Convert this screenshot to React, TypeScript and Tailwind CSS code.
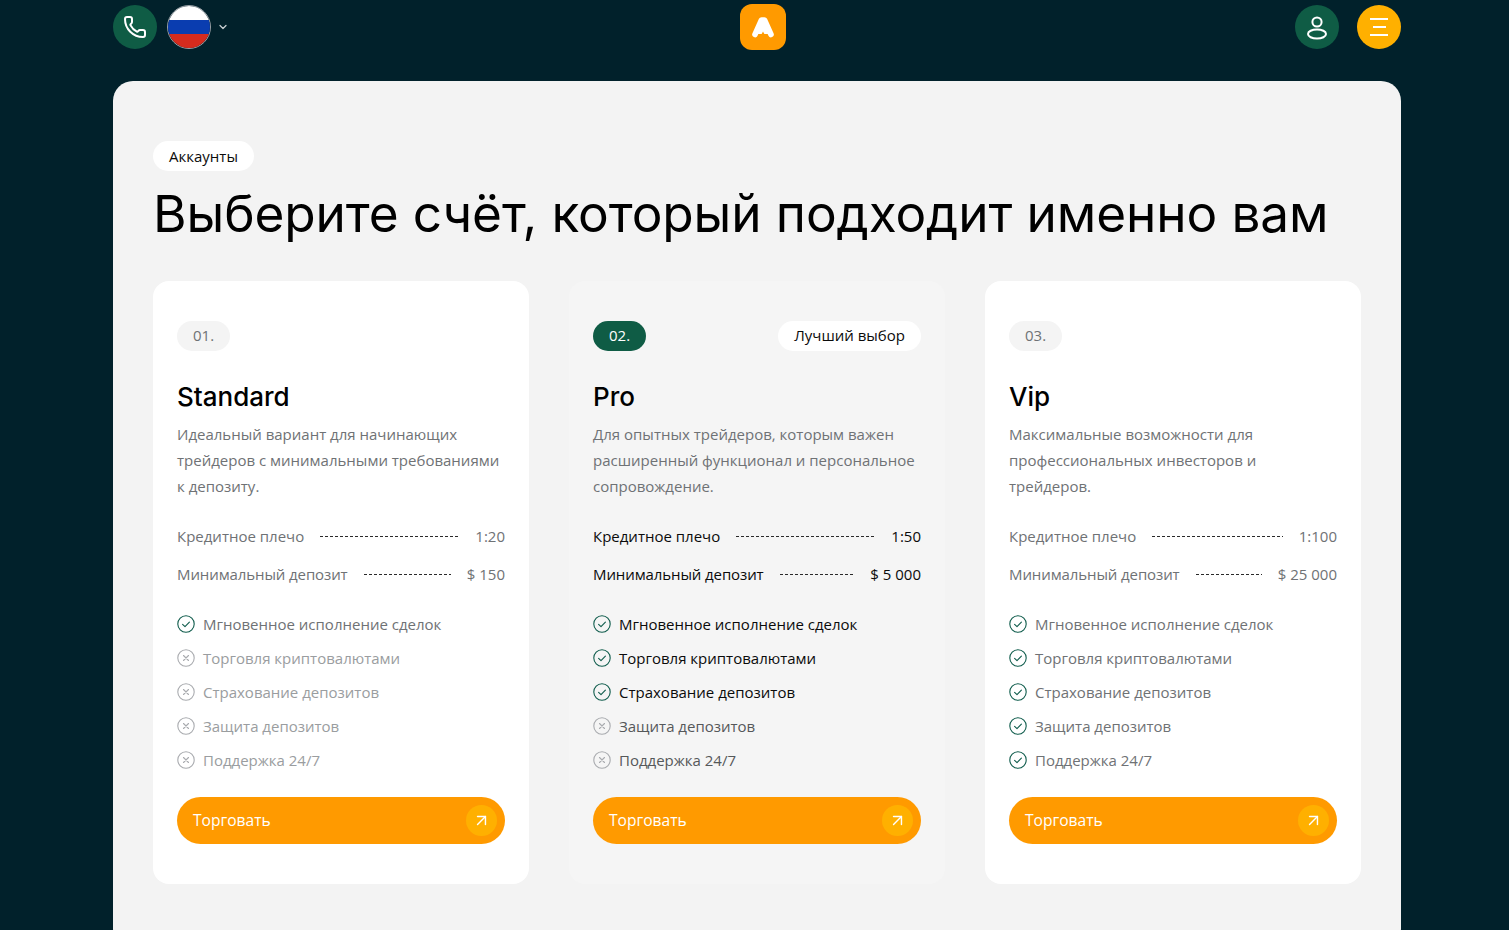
import React from "react";
import { Phone, ChevronDown, ArrowUpRight } from "lucide-react";

const plans = [
  {
    num: "01.",
    name: "Standard",
    desc: "Идеальный вариант для начинающих трейдеров с минимальными требованиями к депозиту.",
    leverage: "1:20",
    deposit: "$ 150",
    included: 1,
  },
  {
    num: "02.",
    name: "Pro",
    desc: "Для опытных трейдеров, которым важен расширенный функционал и персональное сопровождение.",
    leverage: "1:50",
    deposit: "$ 5 000",
    included: 3,
    best: true,
  },
  {
    num: "03.",
    name: "Vip",
    desc: "Максимальные возможности для профессиональных инвесторов и трейдеров.",
    leverage: "1:100",
    deposit: "$ 25 000",
    included: 5,
  },
];

const features = [
  "Мгновенное исполнение сделок",
  "Торговля криптовалютами",
  "Страхование депозитов",
  "Защита депозитов",
  "Поддержка 24/7",
];

function CheckIcon() {
  return (
    <svg width="18" height="18" viewBox="0 0 18 18" fill="none" className="shrink-0">
      <circle cx="9" cy="9" r="8.2" stroke="#0f5c4c" strokeWidth="1.1" />
      <path d="M5.6 9.4l2.4 2.3 4.4-4.6" stroke="#0f5c4c" strokeWidth="1.1" strokeLinecap="round" strokeLinejoin="round" />
    </svg>
  );
}

function CrossIcon() {
  return (
    <svg width="18" height="18" viewBox="0 0 18 18" fill="none" className="shrink-0">
      <circle cx="9" cy="9" r="8.2" stroke="#a9abaf" strokeWidth="1.1" />
      <path d="M6.5 6.5l5 5M11.5 6.5l-5 5" stroke="#a9abaf" strokeWidth="1.1" strokeLinecap="round" />
    </svg>
  );
}

function Flag() {
  return (
    <div className="w-11 h-11 rounded-full overflow-hidden border border-[#9aa0a6] flex flex-col">
      <div className="flex-1 bg-white" />
      <div className="flex-1 bg-[#0a3db0]" />
      <div className="flex-1 bg-[#d52b1e]" />
    </div>
  );
}

function Logo() {
  return (
    <div className="w-[46px] h-[46px] rounded-xl bg-[#ff9a00]">
      <svg width="46" height="46" viewBox="0 0 46 46" fill="none">
        <path d="M15 30.5L21.5 16h3L31 30.5" stroke="#fff" strokeWidth="5.6" strokeLinecap="round" strokeLinejoin="round" />
        <path d="M21 15L15 30h16L25 15z" fill="#fff" />
        <path d="M23 27.5l-2.2 4-.6 2.2h5.6l-.6-2.2z" fill="#ff9a00" />
      </svg>
    </div>
  );
}

function Row({ label, value, dark, tight }: { label: string; value: string; dark: boolean; tight?: boolean }) {
  return (
    <div className={`flex items-center gap-4 text-[15px] leading-[26px] ${dark ? "text-[#0b0b0b]" : "text-[#6f7275]"}`}>
      <span className={tight ? "tracking-[-0.1px]" : ""}>{label}</span>
      <span className="flex-1 h-px bg-[repeating-linear-gradient(90deg,#2a2a2a_0,#2a2a2a_3px,transparent_3px,transparent_5px)]" />
      <span>{value}</span>
    </div>
  );
}

function Card({ plan }: { plan: (typeof plans)[number] }) {
  const best = !!plan.best;
  return (
    <div className={`w-[376px] rounded-[16px] px-6 pt-10 pb-10 ${best ? "bg-[#f5f5f5]" : "bg-white"}`}>
      <div className="flex items-center justify-between h-[30px]">
        <span className={`h-[30px] px-4 pb-[1px] rounded-full flex items-center text-[15px] ${best ? "bg-[#0f5c45] text-white" : "bg-[#f4f4f4] text-[#6f7275]"}`}>
          {plan.num}
        </span>
        {best && (
          <span className="h-[30px] px-4 pb-[1px] rounded-full bg-white flex items-center text-[15px] text-[#0b0b0b]">Лучший выбор</span>
        )}
      </div>
      <h3 className="mt-[28px] text-[26px] leading-[36px] font-medium text-black font-['Inter',sans-serif]">{plan.name}</h3>
      <p className="mt-[6px] text-[15px] leading-[26px] text-[#6f7275]">{plan.desc}</p>
      <div className="mt-[24px] flex flex-col gap-3">
        <Row label="Кредитное плечо" value={plan.leverage} dark={best} />
        <Row label="Минимальный депозит" value={plan.deposit} dark={best} tight />
      </div>
      <ul className="mt-[24px] flex flex-col gap-2">
        {features.map((f, i) => {
          const on = i < plan.included;
          return (
            <li key={f} className="flex items-center gap-2 h-[26px] text-[15px]">
              {on ? <CheckIcon /> : <CrossIcon />}
              <span className={best && on ? "text-[#0b0b0b]" : best ? "text-[#55585a]" : on ? "text-[#6f7275]" : "text-[#9a9da0]"}>{f}</span>
            </li>
          );
        })}
      </ul>
      <button className="mt-[24px] w-full h-[47px] rounded-full bg-[#ff9a00] pl-4 pr-2 flex items-center justify-between text-white text-[15.6px]">
        <span>Торговать</span>
        <span className="w-[31px] h-[31px] rounded-full bg-[#ffb000] flex items-center justify-center">
          <ArrowUpRight className="w-[19px] h-[19px]" strokeWidth={1.8} />
        </span>
      </button>
    </div>
  );
}

export default function App() {
  return (
    <div className="h-[930px] overflow-hidden bg-[#01212b] font-['Open_Sans',sans-serif]">
      <header className="h-[81px] ml-[113px] w-[1288px] flex items-start pt-[5px]">
        <div className="flex-1 flex items-center gap-[10px]">
          <div className="w-11 h-11 rounded-full bg-[#0f5c45] flex items-center justify-center">
            <Phone className="w-6 h-6 text-white" strokeWidth={2} />
          </div>
          <Flag />
          <ChevronDown className="w-3 h-3 text-[#c9cfd2] -ml-[4px]" strokeWidth={2.5} />
        </div>
        <div className="-mt-[1px] ml-[6px] -mr-[6px]">
          <Logo />
        </div>
        <div className="flex-1 flex items-center justify-end gap-[18px]">
          <div className="w-11 h-11 rounded-full bg-[#0f5c45] flex items-center justify-center">
            <svg width="24" height="26" viewBox="0 0 24 26" fill="none" stroke="#fff" strokeWidth="2">
              <circle cx="12" cy="8" r="4.6" />
              <ellipse cx="12" cy="20" rx="9" ry="4.6" />
            </svg>
          </div>
          <div className="w-11 h-11 rounded-full bg-[#ffb000] flex flex-col items-center justify-center gap-[6px]">
            <span className="w-[18px] h-[2px] bg-white" />
            <span className="w-[13px] h-[2px] bg-white" />
            <span className="w-[18px] h-[2px] bg-white" />
          </div>
        </div>
      </header>
      <main className="ml-[113px] w-[1288px] rounded-[20px] bg-[#f3f3f3] px-10 pt-[60px] pb-16">
        <span className="inline-flex h-[30px] items-center rounded-full bg-white px-4 text-[15px] text-[#0b0b0b]">Аккаунты</span>
        <h1 className="mt-[9px] text-[51.3px] leading-[66px] font-normal text-black font-['Inter',sans-serif] tracking-[-0.1px] whitespace-nowrap">
          Выберите счёт, который подходит именно вам
        </h1>
        <div className="mt-[35px] flex gap-10">
          {plans.map((p) => (
            <Card key={p.num} plan={p} />
          ))}
        </div>
      </main>
    </div>
  );
}
